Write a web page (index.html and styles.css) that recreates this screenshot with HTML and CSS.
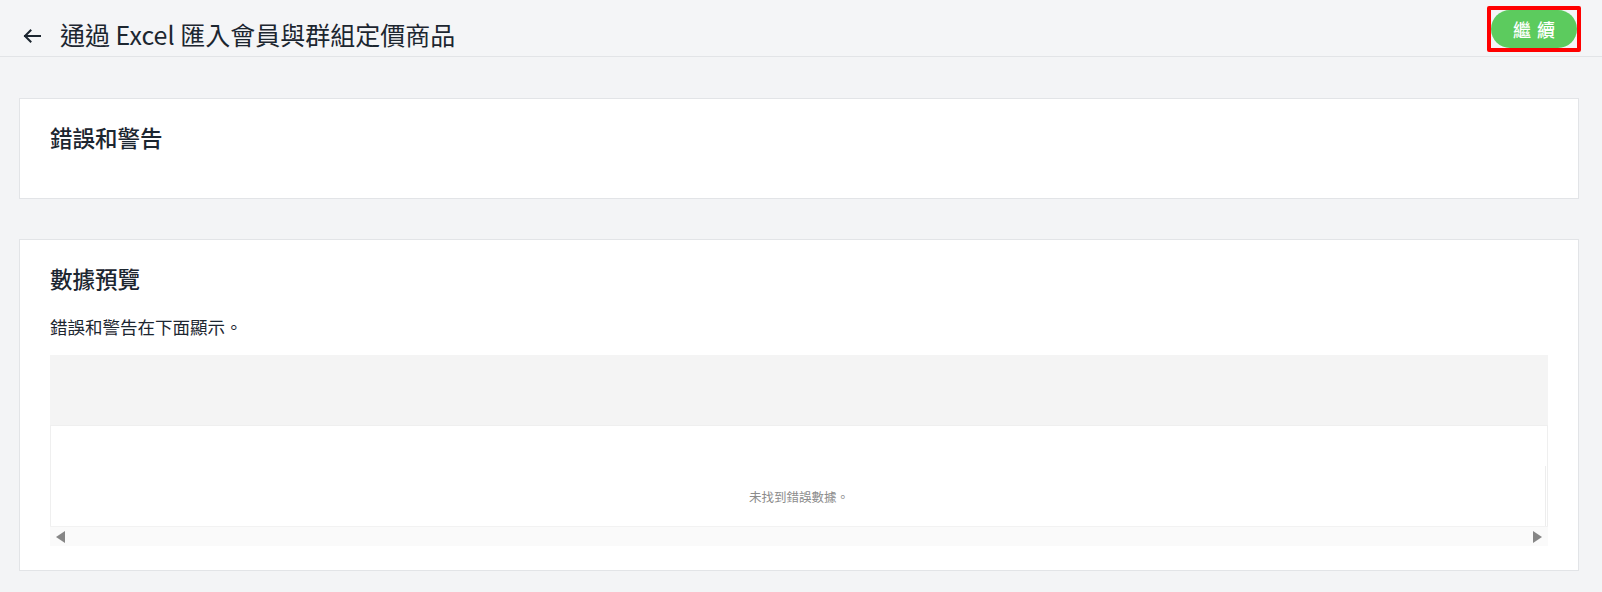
FILE: index.html
```html
<!DOCTYPE html>
<html lang="zh-Hant">
<head>
<meta charset="utf-8">
<title>通過 Excel 匯入會員與群組定價商品</title>
<link rel="stylesheet" href="styles.css">
</head>
<body>
<header class="topbar">
  <div class="topbar-left">
    <svg class="back-icon" width="18" height="14" viewBox="0 0 18 14" aria-hidden="true">
      <path d="M17 7H2M7.5 1.5L2 7l5.5 5.5" fill="none" stroke="#1c2630" stroke-width="2" stroke-linecap="square" stroke-linejoin="miter"/>
    </svg>
    <h1 class="page-title">通過 Excel 匯入會員與群組定價商品</h1>
  </div>
  <div class="highlight">
    <button class="btn-continue">繼 續</button>
  </div>
</header>

<main class="content">
  <section class="card">
    <h2 class="card-title">錯誤和警告</h2>
  </section>

  <section class="card">
    <h2 class="card-title">數據預覽</h2>
    <p class="card-text">錯誤和警告在下面顯示。</p>
    <div class="table">
      <div class="table-head"></div>
      <div class="table-body">
        <div class="empty">未找到錯誤數據。</div>
        <div class="vtrack"></div>
      </div>
      <div class="hscroll">
        <span class="arrow arrow-left"></span>
        <span class="arrow arrow-right"></span>
      </div>
    </div>
  </section>
</main>
</body>
</html>
```

FILE: styles.css
```css
* { box-sizing: border-box; }

html, body {
  margin: 0;
  padding: 0;
}

body {
  background: #f3f4f6;
  color: #1c2630;
  font-family: "Noto Sans CJK TC", "Noto Sans", sans-serif;
}

.topbar {
  display: flex;
  justify-content: space-between;
  align-items: flex-start;
  height: 57px;
  padding: 0 21px 0 23px;
  border-bottom: 1px solid #e2e4e7;
  background: #f4f5f7;
}

.topbar-left {
  display: flex;
  align-items: center;
  margin-top: 17px;
}

.back-icon {
  display: block;
  margin-top: 4px;
  margin-right: 19px;
}

.page-title {
  margin: 0;
  font-size: 25px;
  line-height: 34px;
  font-weight: 400;
  color: #1c2630;
}

.highlight {
  margin-top: 6px;
  border: 4px solid #ff0000;
  border-radius: 2px;
  display: flex;
}

.btn-continue {
  width: 86px;
  height: 38px;
  border: 0;
  border-radius: 19px;
  background: #5ccb5e;
  color: #ffffff;
  font-family: "Noto Sans CJK TC", sans-serif;
  font-size: 18px;
  font-weight: 500;
  letter-spacing: 1px;
  padding: 0 0 0 1px;
  cursor: pointer;
}

.content {
  display: flex;
  flex-direction: column;
  gap: 40px;
  padding: 41px 23px 0 19px;
}

.card {
  background: #ffffff;
  border: 1px solid #e2e4e7;
  padding: 23px 30px 24px;
}

.card-title {
  margin: 0 0 22px;
  font-size: 22.5px;
  line-height: 30px;
  font-weight: 500;
  color: #1c2630;
}

.card-text {
  margin: 0 0 16px;
  font-size: 17.5px;
  line-height: 24px;
  color: #1c2630;
}

.table {
  display: flex;
  flex-direction: column;
}

.table-head {
  height: 70px;
  background: #f4f4f4;
}

.table-body {
  position: relative;
  height: 101px;
  border: 1px solid #efefef;
  border-bottom: 0;
  background: #ffffff;
  padding-top: 62px;
}

.empty {
  text-align: center;
  font-size: 12.5px;
  line-height: 18px;
  color: #8c8c8c;
}

.vtrack {
  position: absolute;
  right: 1px;
  top: 40px;
  bottom: 0;
  width: 1px;
  background: #ededed;
}

.hscroll {
  display: flex;
  justify-content: space-between;
  align-items: center;
  height: 20px;
  padding: 0 6px;
  background: #fafafa;
  border-top: 1px solid #f2f2f2;
}

.arrow {
  width: 0;
  height: 0;
  border-top: 6px solid transparent;
  border-bottom: 6px solid transparent;
}

.arrow-left {
  border-right: 9px solid #868686;
}

.arrow-right {
  border-left: 9px solid #868686;
}
```
